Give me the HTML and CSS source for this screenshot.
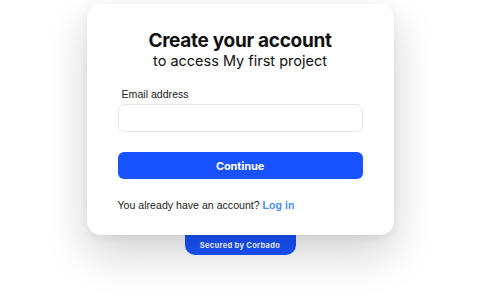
FILE: index.html
```html
<!DOCTYPE html>
<html>
<head>
<meta charset="utf-8">
<link rel="stylesheet" href="styles.css">
</head>
<body>
<div class="page">
  <div class="card">
    <div class="head">
      <h1 class="title">Create your account</h1>
      <p class="subtitle">to access My first project</p>
    </div>
    <label class="label" for="email">Email address</label>
    <input class="input" id="email" type="email">
    <button class="btn">Continue</button>
    <p class="footer">You already have an account? <a class="link" href="#">Log in</a></p>
  </div>
  <div class="badge">Secured by Corbado</div>
</div>
</body>
</html>
```
FILE: styles.css
```css
* { box-sizing: border-box; }
html, body { margin: 0; padding: 0; background: #fff; }
html { height: 100%; }
body { min-height: 300px; font-family: Inter, "Noto Sans", sans-serif; color: #111; }
.page {
  display: flex;
  flex-direction: column;
  align-items: center;
  padding-top: 4px;
  min-height: 300px;
}
.card {
  position: relative;
  z-index: 1;
  width: 307px;
  height: 231px;
  background: #fff;
  border-radius: 14px;
  box-shadow: 0 18px 44px rgba(0,0,0,0.18), 0 3px 8px rgba(0,0,0,0.06);
  padding: 26px 31px 0 31px;
  display: flex;
  flex-direction: column;
}
.head { text-align: center; }
.title {
  margin: 0;
  font-size: 19px;
  font-weight: 700;
  line-height: 22px;
  color: #111;
  letter-spacing: -0.3px;
}
.subtitle {
  margin: 0;
  font-size: 14.5px;
  line-height: 18px;
  color: #111;
}
.label {
  margin-top: 17px;
  font-family: "Liberation Sans", Arial, sans-serif;
  font-size: 10.6px;
  line-height: 14px;
  padding-left: 4px;
  color: #222;
}
.input {
  margin-top: 3px;
  height: 28px;
  width: 100%;
  border: 1px solid #e6e6e6;
  border-radius: 7px;
  background: #fff;
  outline: none;
}
.btn {
  margin-top: 20px;
  height: 27px;
  width: 100%;
  border: none;
  border-radius: 6px;
  background: #1953ff;
  color: #fff;
  font-family: Inter, sans-serif;
  font-weight: 700;
  font-size: 11px;
  letter-spacing: -0.1px;
}
.footer {
  margin: 19px 0 0 0;
  font-family: "Liberation Sans", Arial, sans-serif;
  font-size: 10.6px;
  line-height: 14px;
  color: #222;
}
.link { color: #4b8df8; font-weight: 700; text-decoration: none; }
.badge {
  width: 111px;
  height: 20px;
  background: #1953ff;
  color: #fff;
  border-radius: 0 0 10px 10px;
  font-size: 7.5px;
  font-weight: 700;
  letter-spacing: 0.3px;
  display: flex;
  align-items: center;
  justify-content: center;
}
```
